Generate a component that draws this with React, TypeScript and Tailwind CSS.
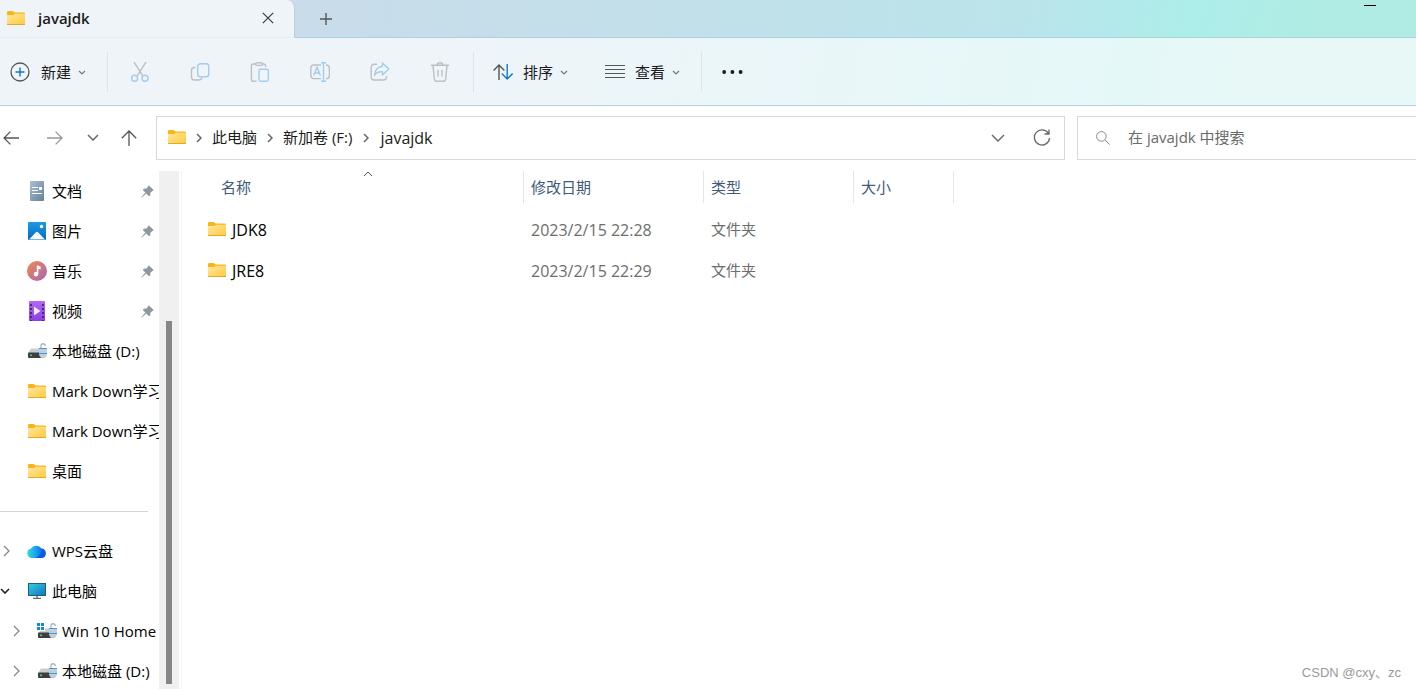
import type { ReactNode } from "react";

function FolderIcon() {
  return (
    <svg width="18" height="15" viewBox="0 0 18 15" className="shrink-0">
      <defs>
        <linearGradient id="folderFront" x1="0" y1="0" x2="1" y2="1">
          <stop offset="0" stopColor="#ffe8a0" />
          <stop offset="1" stopColor="#ffc93c" />
        </linearGradient>
      </defs>
      <path d="M0 1.2Q0 0 1.2 0H5.6L7.6 1.6H16.8Q18 1.6 18 2.8V8H0Z" fill="#f8b518" />
      <path d="M0 4H6L8 2.7H18V13.2Q18 14 17.2 14H.8Q0 14 0 13.2Z" fill="url(#folderFront)" />
      <path d="M0 13H18V13.4Q18 14 17.2 14H.8Q0 14 0 13.4Z" fill="#e9a820" />
    </svg>
  );
}

function DocumentIcon() {
  return (
    <svg width="14" height="20" viewBox="0 0 14 20">
      <defs>
        <linearGradient id="doc" x1="0" y1="0" x2="1" y2="1">
          <stop offset="0" stopColor="#a9bfd3" />
          <stop offset="1" stopColor="#64809d" />
        </linearGradient>
      </defs>
      <rect width="14" height="20" rx="1" fill="url(#doc)" />
      <path d="M2 6.5H8M2 9.5H8M2 12.5H12" stroke="#fff" strokeWidth="1.2" />
      <rect x="9" y="6" width="3" height="3" fill="#fff" />
    </svg>
  );
}

function PictureIcon() {
  return (
    <svg width="18" height="18" viewBox="0 0 18 18">
      <defs>
        <linearGradient id="pic" x1="0" y1="0" x2="0" y2="1">
          <stop offset="0" stopColor="#1a9be6" />
          <stop offset="1" stopColor="#0a68bd" />
        </linearGradient>
      </defs>
      <rect width="18" height="18" rx="1" fill="url(#pic)" />
      <path d="M1 17.4L8 10.2Q9 9.2 10 10.2L17 17.4Z" fill="#f4f9ff" />
      <circle cx="13.5" cy="4.5" r="1.7" fill="#fff" />
    </svg>
  );
}

function MusicIcon() {
  return (
    <svg width="20" height="20" viewBox="0 0 20 20">
      <defs>
        <linearGradient id="music" x1="0" y1="0" x2="1" y2="1">
          <stop offset="0" stopColor="#f08a4b" />
          <stop offset="1" stopColor="#a763b8" />
        </linearGradient>
      </defs>
      <circle cx="10" cy="10" r="10" fill="url(#music)" />
      <path d="M9.8 4.2L13.6 5.4V8.4L11.4 7.7V13A2.3 2.3 0 1 1 9.8 10.9Z" fill="#fff" />
    </svg>
  );
}

function VideoIcon() {
  return (
    <svg width="16" height="20" viewBox="0 0 16 20">
      <defs>
        <linearGradient id="video" x1="0" y1="0" x2="0" y2="1">
          <stop offset="0" stopColor="#b06af5" />
          <stop offset="1" stopColor="#8a3ee0" />
        </linearGradient>
      </defs>
      <rect width="16" height="20" rx="1" fill="url(#video)" />
      <path d="M2 3V20M14 3V20" stroke="#4b1d87" strokeWidth="1.8" strokeDasharray="2 2" />
      <path d="M5 5.5L11.5 10 5 14.5Z" fill="#f3eaff" />
    </svg>
  );
}

function DriveIcon({ system }: { system?: boolean }) {
  return (
    <svg width="20" height="17" viewBox="0 0 20 17">
      {system && <path d="M0 0H3V3H0ZM4 0H7V3H4ZM0 4H3V7H0ZM4 4H7V7H4Z" fill="#0f8ad8" />}
      <path d={system ? "M8 5.5H15L18 10H1L3 8H8Z" : "M4 5.5H15L18 10H1Z"} fill="#c9ccd0" />
      <rect x="1" y="9.5" width="16" height="5.5" rx="1" fill="#3c4043" />
      <rect x="3" y="11.5" width="2" height="1.6" fill="#3ddc57" />
      <path d="M14 6V3Q14 .8 16 .8Q18 .8 18.4 3" fill="none" stroke="#a9b8c4" strokeWidth="1.4" />
      <path d="M12 5H20V11.5Q19 15 16 15.6Q13 15 12 11.5Z" fill="#c3ced6" />
      <path d="M12 5.5H20M12 10.5H20" stroke="#3e9bdc" strokeWidth="1" />
    </svg>
  );
}

function CloudIcon() {
  return (
    <svg width="20" height="15" viewBox="0 0 20 15">
      <defs>
        <linearGradient id="cloud" x1="0" y1="0" x2="1" y2="0">
          <stop offset="0" stopColor="#2be0d0" />
          <stop offset=".5" stopColor="#1a9cf5" />
          <stop offset="1" stopColor="#0b50d8" />
        </linearGradient>
      </defs>
      <path d="M5 14A5 4.8 0 0 1 4 4.6A6 5.5 0 0 1 14.5 4.5A4.9 4.9 0 0 1 15 14Z" fill="url(#cloud)" />
      <path d="M7.5 14Q14 13 14.8 4.6A4.8 4.8 0 0 1 15 14Z" fill="#0c5ce0" />
    </svg>
  );
}

function ComputerIcon() {
  return (
    <svg width="18" height="16" viewBox="0 0 18 16">
      <defs>
        <linearGradient id="screen" x1="0" y1="0" x2="1" y2="1">
          <stop offset="0" stopColor="#33d0e0" />
          <stop offset="1" stopColor="#1272bb" />
        </linearGradient>
      </defs>
      <rect x=".5" y=".5" width="17" height="12" fill="url(#screen)" stroke="#1b6080" />
      <path d="M9 13V15M5 15.4H13" stroke="#5c6d78" strokeWidth="1.4" />
    </svg>
  );
}

function PinIcon() {
  return (
    <svg width="13" height="13" viewBox="0 0 13 13" className="shrink-0">
      <path d="M7.8 .2L12.8 5.2 11.8 5.8 9.6 7.4 9.2 10.4 8 11.2 5.3 8.5 .8 12.6 .3 12.2 4.4 7.6 1.8 5 2.8 3.8 5.6 3.4 7.2 1.2Z" fill="#8e989f" />
    </svg>
  );
}

type ChevronProps = { dir?: "down" | "right" | "up"; size?: number; className?: string; weight?: number };

function Chevron({ dir = "down", size = 8, className = "", weight = 1.2 }: ChevronProps) {
  const half = size / 2;
  const width = dir === "right" ? half + 2 : size + 2;
  const height = dir === "right" ? size + 2 : half + 2;
  const d = {
    down: `M1 1L${half + 1} ${half + 1} ${size + 1} 1`,
    up: `M1 ${half + 1}L${half + 1} 1 ${size + 1} ${half + 1}`,
    right: `M1 1L${half + 1} ${half + 1} 1 ${size + 1}`,
  }[dir];
  return (
    <svg width={width} height={height} viewBox={`0 0 ${width} ${height}`} className={`shrink-0 ${className}`}>
      <path d={d} fill="none" stroke="currentColor" strokeWidth={weight} />
    </svg>
  );
}

function ToolIcon({ children }: { children: ReactNode }) {
  return (
    <svg width="20" height="20" viewBox="0 0 20 20" fill="none" stroke="#bcc0c4" strokeWidth="1.4" className="shrink-0">
      {children}
    </svg>
  );
}

const blue = "#a3cdee";

const tools = [
  {
    label: "剪切",
    icon: (
      <ToolIcon>
        <path d="M4 0L12.6 13.6M16 0L7.4 13.6" />
        <circle cx="4.6" cy="16.2" r="3" stroke={blue} />
        <circle cx="15" cy="16.2" r="3" stroke={blue} />
      </ToolIcon>
    ),
  },
  {
    label: "复制",
    icon: (
      <ToolIcon>
        <path d="M5.5 5.5H4.5Q1.5 5.5 1.5 8.5V15Q1.5 18 4.5 18H8.5Q11.5 18 12 15.5" />
        <rect x="7.7" y="1.7" width="11" height="13" rx="2.5" stroke={blue} />
      </ToolIcon>
    ),
  },
  {
    label: "粘贴",
    icon: (
      <ToolIcon>
        <path d="M6 2H3.2Q1.4 2 1.4 3.8V17.4Q1.4 19.2 3.2 19.2H6.5M12 2H14Q15.6 2 15.6 3.8V5" />
        <rect x="5.5" y=".8" width="7" height="2.6" rx="1.3" />
        <rect x="9" y="7.2" width="9.3" height="12" rx="1.4" stroke={blue} />
      </ToolIcon>
    ),
  },
  {
    label: "重命名",
    icon: (
      <ToolIcon>
        <path d="M11 3H3.8Q.8 3 .8 6V13.6Q.8 16.6 3.8 16.6H11M16 3Q19.4 3 19.4 6V13.6Q19.4 16.6 16 16.6" />
        <path d="M3.6 13.6L7 5.4 10.4 13.6M4.8 11H9.2M13.5 .8V19.2M11 .8H16M11 19.2H16" stroke={blue} />
      </ToolIcon>
    ),
  },
  {
    label: "共享",
    icon: (
      <ToolIcon>
        <path d="M7 2.2H4.2Q1.2 2.2 1.2 5.2V15Q1.2 18 4.2 18H13.5Q16.5 18 16.5 15V14" />
        <path d="M12.4 1L18.8 7 12.4 13V9.8Q7 9.4 4.6 13.4Q5 5 12.4 4.2Z" stroke={blue} strokeLinejoin="round" />
      </ToolIcon>
    ),
  },
  {
    label: "删除",
    icon: (
      <ToolIcon>
        <path d="M1 3.2H19M7.2 3Q7.2 .8 10 .8Q12.8 .8 12.8 3M3 3.4L4.3 16.8Q4.6 19.2 6.6 19.2H13.4Q15.4 19.2 15.7 16.8L17 3.4M8 8V14.5M12 8V14.5" />
      </ToolIcon>
    ),
  },
];

type SideItem = { name: string; icon: ReactNode; pinned?: boolean };

const quickAccess: SideItem[] = [
  { name: "文档", icon: <DocumentIcon />, pinned: true },
  { name: "图片", icon: <PictureIcon />, pinned: true },
  { name: "音乐", icon: <MusicIcon />, pinned: true },
  { name: "视频", icon: <VideoIcon />, pinned: true },
  { name: "本地磁盘 (D:)", icon: <DriveIcon /> },
  { name: "Mark Down学习", icon: <FolderIcon /> },
  { name: "Mark Down学习", icon: <FolderIcon /> },
  { name: "桌面", icon: <FolderIcon /> },
];

const files = [
  { name: "JDK8", date: "2023/2/15 22:28", type: "文件夹" },
  { name: "JRE8", date: "2023/2/15 22:29", type: "文件夹" },
];

function TitleBar() {
  return (
    <header className="flex h-[38px] items-stretch justify-between border-b border-[#a9d3d8] bg-[linear-gradient(100deg,#c8dcea_25%,#bbe4ea_72%,#adedea_84%,#b0ece3_94%)]">
      <div className="flex">
        <div className="-mb-px flex w-[295px] items-center rounded-tr-lg border-r border-b border-r-[#b9cfdb] border-b-[#e6edf2] bg-[#eff4f9] pb-px pl-[7px] pr-5">
          <FolderIcon />
          <span className="ml-[13px] flex-1 text-[15px] font-semibold text-[#1b1b1b]">javajdk</span>
          <button type="button" aria-label="关闭标签页">
            <svg width="12" height="12" viewBox="0 0 12 12" stroke="#333" strokeWidth="1.1">
              <path d="M.8 .8L11.2 11.2M11.2 .8L.8 11.2" />
            </svg>
          </button>
        </div>
        <button type="button" aria-label="新建标签页" className="ml-[25px]">
          <svg width="12" height="12" viewBox="0 0 12 12" stroke="#555" strokeWidth="1.4">
            <path d="M6 0V12M0 6H12" />
          </svg>
        </button>
      </div>
      <button type="button" aria-label="最小化" className="mr-10 self-start pt-[5px]">
        <span className="block h-px w-3 bg-black" />
      </button>
    </header>
  );
}

function Toolbar() {
  return (
    <div className="flex h-[68px] items-center border-b border-[#b0d3d8] bg-[linear-gradient(100deg,#eff4f9_30%,#e5f8f8_80%,#e8f8f6_92%)] text-[15px] text-[#1b1b1b]">
      <button type="button" className="flex h-10 w-[107px] items-center pl-[10px] pt-px">
        <svg width="20" height="20" viewBox="0 0 20 20" fill="none">
          <circle cx="10" cy="10" r="9" stroke="#555" strokeWidth="1.3" />
          <path d="M10 5.5V14.5M5.5 10H14.5" stroke="#0f78d4" strokeWidth="1.4" />
        </svg>
        <span className="ml-[11px] mr-[7px]">新建</span>
        <Chevron size={6} className="text-[#777]" />
      </button>
      <div className="flex h-10 items-center gap-10 border-l border-r border-[#dde4e9] pl-[22px] pr-[23px]">
        {tools.map((tool) => (
          <button key={tool.label} type="button" aria-label={tool.label} disabled>
            {tool.icon}
          </button>
        ))}
      </div>
      <div className="flex h-10 w-[228px] items-center gap-[37px] border-r border-[#dde4e9] pl-[19px] pt-px">
        <button type="button" className="flex items-center">
          <svg width="20" height="16" viewBox="0 0 20 16" fill="none" strokeWidth="1.4">
            <path d="M6 16V1M.6 6.4L6 1 11.4 6.4" stroke="#555" />
            <path d="M14.2 0V15M8.8 9.6L14.2 15 19.6 9.6" stroke="#0f78d4" />
          </svg>
          <span className="ml-[10px] mr-[7px]">排序</span>
          <Chevron size={6} className="text-[#777]" />
        </button>
        <button type="button" className="flex items-center">
          <svg width="20" height="14" viewBox="0 0 20 14" stroke="#555" strokeWidth="1">
            <path d="M0 .5H20M0 4.5H20M0 8.5H20M0 12.5H20" />
          </svg>
          <span className="ml-[10px] mr-[7px]">查看</span>
          <Chevron size={6} className="text-[#777]" />
        </button>
      </div>
      <button type="button" aria-label="更多" className="ml-5">
        <svg width="21" height="4" viewBox="0 0 21 4" fill="#1b1b1b">
          <circle cx="2.2" cy="2" r="1.9" />
          <circle cx="10.4" cy="2" r="1.9" />
          <circle cx="18.6" cy="2" r="1.9" />
        </svg>
      </button>
    </div>
  );
}

function AddressRow() {
  return (
    <div className="flex h-[65px] shrink-0 items-center pb-[2px]">
      <nav className="flex w-[156px] shrink-0 items-center pl-[3px] text-[#666]">
        <button type="button" aria-label="后退">
          <svg width="16" height="14" viewBox="0 0 16 14" fill="none" stroke="#555" strokeWidth="1.3">
            <path d="M16 7H1M7.4 .6L1 7 7.4 13.4" />
          </svg>
        </button>
        <button type="button" aria-label="前进" className="ml-7">
          <svg width="16" height="14" viewBox="0 0 16 14" fill="none" stroke="#999" strokeWidth="1.3">
            <path d="M0 7H15M8.6 .6L15 7 8.6 13.4" />
          </svg>
        </button>
        <button type="button" aria-label="最近浏览的位置" className="ml-6">
          <Chevron size={10} weight={1.5} />
        </button>
        <button type="button" aria-label="向上" className="ml-[22px]">
          <svg width="16" height="16" viewBox="0 0 16 16" fill="none" stroke="#555" strokeWidth="1.3">
            <path d="M8 16V1M.8 8.2L8 1 15.2 8.2" />
          </svg>
        </button>
      </nav>
      <div className="flex h-11 flex-1 items-center border border-[#d9d9d9] pl-[11px] pr-[13px] text-[15px] text-[#1b1b1b]">
        <FolderIcon />
        <Chevron dir="right" weight={1.5} className="mx-[10px] text-[#666]" />
        <a href="#pc">此电脑</a>
        <Chevron dir="right" weight={1.5} className="mx-[10px] text-[#666]" />
        <a href="#f">新加卷 (F:)</a>
        <Chevron dir="right" weight={1.5} className="mx-[11px] text-[#666]" />
        <a href="#javajdk" className="text-base">
          javajdk
        </a>
        <button type="button" aria-label="展开地址栏" className="ml-auto mr-7 text-[#666]">
          <Chevron size={12} weight={1.4} />
        </button>
        <button type="button" aria-label="刷新">
          <svg width="18" height="18" viewBox="0 0 18 18" fill="none" stroke="#666" strokeWidth="1.3">
            <path d="M15.6 4.6A7.6 7.6 0 1 0 16.6 9M16 .6V5H11.6" />
          </svg>
        </button>
      </div>
      <label className="ml-3 flex h-11 w-[339px] items-center border border-r-0 border-[#d9d9d9] pl-[18px]">
        <svg width="14" height="14" viewBox="0 0 14 14" fill="none" stroke="#888" strokeWidth="1" className="shrink-0">
          <circle cx="5.4" cy="5.4" r="4.8" />
          <path d="M9 9L13.6 13.6" />
        </svg>
        <input
          type="text"
          aria-label="搜索"
          placeholder="在 javajdk 中搜索"
          className="ml-[18px] min-w-0 flex-1 text-[15px] outline-none placeholder:text-[#6a6a6a]"
        />
      </label>
    </div>
  );
}

type TreeRowProps = { name: string; icon: ReactNode; open?: boolean; nested?: boolean };

function TreeRow({ name, icon, open, nested }: TreeRowProps) {
  return (
    <li className={`flex h-10 items-center whitespace-nowrap ${nested ? "pl-[10px]" : ""}`}>
      <button type="button" aria-label={`展开 ${name}`} className="flex w-[27px] shrink-0 text-[#888]">
        {open ? (
          <Chevron weight={1.6} className="text-[#222]" />
        ) : (
          <Chevron dir="right" size={10} weight={1.3} className="ml-[3px]" />
        )}
      </button>
      <span className="mr-[5px] flex w-5 shrink-0 justify-center">{icon}</span>
      {name}
    </li>
  );
}

function Sidebar() {
  return (
    <aside className="flex w-[182px] shrink-0 border-r border-[#f3f3f3] text-[15px] text-black">
      <div className="min-w-0 flex-1 overflow-hidden">
        <ul>
          {quickAccess.map((item, i) => (
            <li key={i} className="flex h-10 items-center whitespace-nowrap pl-[27px]">
              <span className="mr-[5px] flex w-5 shrink-0 justify-center">{item.icon}</span>
              {item.name}
              {item.pinned && (
                <span className="ml-auto mr-[5px]">
                  <PinIcon />
                </span>
              )}
            </li>
          ))}
        </ul>
        <div className="flex h-10 items-center pr-[11px]">
          <hr className="w-full border-[#d5d5d5]" />
        </div>
        <ul>
          <TreeRow name="WPS云盘" icon={<CloudIcon />} />
          <TreeRow name="此电脑" icon={<ComputerIcon />} open />
          <TreeRow name="Win 10 Home" icon={<DriveIcon system />} nested />
          <TreeRow name="本地磁盘 (D:)" icon={<DriveIcon />} nested />
        </ul>
      </div>
      <div className="mr-[2px] flex w-5 flex-col items-center bg-[#f0f0f0] pb-[5px] pt-[150px]">
        <div className="w-[6px] flex-1 bg-[#868686]" />
      </div>
    </aside>
  );
}

function FileTable() {
  return (
    <main className="min-w-0 flex-1">
      <table className="w-[772px] table-fixed text-left text-[15px]">
        <thead className="text-[#42597a]">
          <tr className="h-[38px] align-top">
            <th className="relative w-[342px] p-0 font-normal">
              <span className="flex h-8 items-center border-r border-[#e5e5e5] pl-[39px]">名称</span>
              <Chevron dir="up" size={8} weight={1} className="absolute left-[181px] top-0 text-[#555]" />
            </th>
            <th className="w-[180px] p-0 font-normal">
              <span className="flex h-8 items-center border-r border-[#e5e5e5] pl-[7px]">修改日期</span>
            </th>
            <th className="w-[150px] p-0 font-normal">
              <span className="flex h-8 items-center border-r border-[#e5e5e5] pl-[7px]">类型</span>
            </th>
            <th className="w-[100px] p-0 font-normal">
              <span className="flex h-8 items-center border-r border-[#e5e5e5] pl-[7px]">大小</span>
            </th>
          </tr>
        </thead>
        <tbody className="text-[#6d6d6d]">
          {files.map((file) => (
            <tr key={file.name} className="h-[41px]">
              <td className="p-0 pl-[26px] text-base text-black">
                <span className="flex items-center gap-[6px]">
                  <FolderIcon />
                  {file.name}
                </span>
              </td>
              <td className="p-0 pl-[7px] text-base">{file.date}</td>
              <td className="p-0 pl-[7px]">{file.type}</td>
              <td className="p-0 pl-[7px]" />
            </tr>
          ))}
        </tbody>
      </table>
    </main>
  );
}

export default function App() {
  return (
    <div className="relative flex h-screen flex-col overflow-hidden bg-white font-['Open_Sans','Noto_Sans_CJK_SC',sans-serif]">
      <TitleBar />
      <Toolbar />
      <AddressRow />
      <div className="flex min-h-0 flex-1">
        <Sidebar />
        <FileTable />
      </div>
      <p className="absolute bottom-[7px] right-[15px] font-['Liberation_Sans','Noto_Sans_CJK_SC',sans-serif] text-[13px] text-[#999]">
        CSDN @cxy、zc
      </p>
    </div>
  );
}
